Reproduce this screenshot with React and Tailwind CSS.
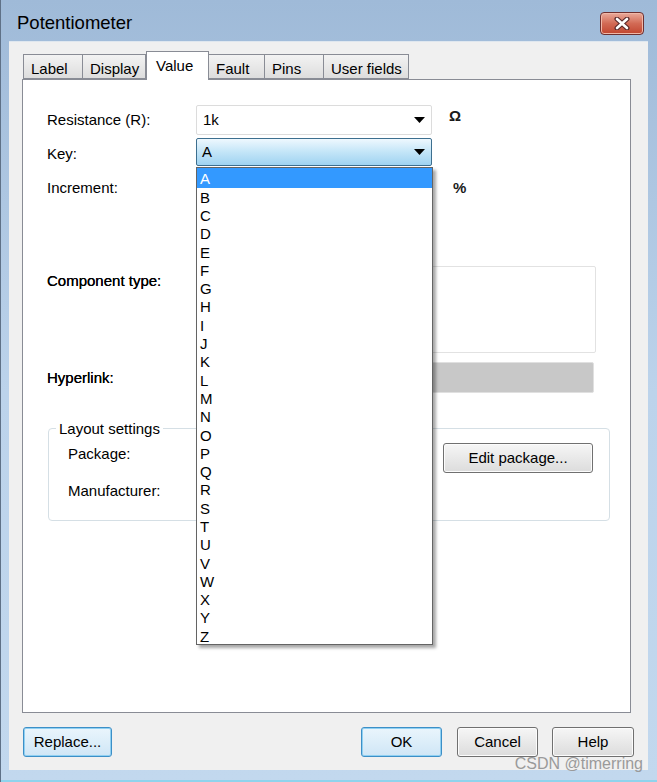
import React from 'react';

const TABS = [
  { key: 'label', label: 'Label', w: 'w-[60px]' },
  { key: 'display', label: 'Display', w: 'w-[64px]' },
  { key: 'value', label: 'Value', w: 'w-[63px]' },
  { key: 'fault', label: 'Fault', w: 'w-[57px]' },
  { key: 'pins', label: 'Pins', w: 'w-[60px]' },
  { key: 'user', label: 'User fields', w: 'w-[86px]' },
];

const LETTERS = 'ABCDEFGHIJKLMNOPQRSTUVWXYZ'.split('');

function Arrow() {
  return (
    <svg width="11" height="6" viewBox="0 0 11 6" className="shrink-0">
      <path d="M0 0 L11 0 L5.5 6 Z" fill="#000" />
    </svg>
  );
}

function WinButton({ children, focused, className = '' }) {
  return (
    <button
      className={`h-[30px] rounded-[3px] border text-[15px] text-black ${
        focused
          ? 'border-[#3c8fc7] bg-gradient-to-b from-[#eaf5fc] to-[#cfe6f6] shadow-[inset_0_0_0_1px_#8fd0f2]'
          : 'border-[#707070] bg-gradient-to-b from-[#f6f6f6] to-[#dcdcdc] shadow-[inset_0_0_0_1px_#fcfcfc]'
      } ${className}`}
    >
      {children}
    </button>
  );
}

export default function App() {
  return (
    <div
      className="w-[657px] h-[782px] flex flex-col bg-gradient-to-b from-[#9fbad8] via-[#bcd3eb] to-[#c2d8ee] border-l border-[#5f7187] overflow-hidden"
      style={{ fontFamily: '"Liberation Sans", Arial, sans-serif' }}
    >
      {/* Title bar */}
      <div className="h-[41px] shrink-0 flex items-center justify-between pl-[16px] pr-[13px] pt-[5px]">
        <span className="text-[18.5px] text-black">Potentiometer</span>
        <div className="w-[44px] h-[23px] rounded-[4px] border border-[#6e3030] bg-gradient-to-b from-[#e9a99a] via-[#d26a55] to-[#c1452f] flex items-center justify-center shadow-[inset_0_0_0_1px_#f0b8a8]">
          <svg width="16" height="13" viewBox="0 0 16 13">
            <path d="M3 2 L13 11 M13 2 L3 11" stroke="#5a2a2a" strokeWidth="5" strokeLinecap="round" />
            <path d="M3 2 L13 11 M13 2 L3 11" stroke="#ffffff" strokeWidth="2.6" strokeLinecap="round" />
          </svg>
        </div>
      </div>

      {/* Client area */}
      <div className="ml-[8px] w-[639px] h-[729px] shrink-0 bg-[#f0f0f0] border-t border-[#dfe7ef] pl-[13px] relative">
        {/* Tabs */}
        <div className="mt-[9px] h-[28px] flex items-end relative z-10 pl-[1px]">
          {TABS.map((t) =>
            t.key === 'value' ? (
              <div
                key={t.key}
                className={`${t.w} h-[29px] -mb-[1px] bg-white border border-b-0 border-[#898c95] pl-[9px] pt-[3px] text-[15px] text-black`}
              >
                {t.label}
              </div>
            ) : (
              <div
                key={t.key}
                className={`${t.w} h-[25px] -ml-px first:ml-0 bg-gradient-to-b from-[#f3f3f3] to-[#dddddd] border border-[#898c95] pl-[7px] pt-[3px] text-[15px] text-black`}
              >
                {t.label}
              </div>
            )
          )}
        </div>

        {/* Tab panel */}
        <div className="w-[609px] h-[634px] bg-white border border-[#898c95] relative pl-[24px]">
          {/* Resistance */}
          <div className="mt-[25px] flex items-center h-[30px]">
            <span className="w-[149px] text-[15px] text-black">Resistance (R):</span>
            <div className="w-[236px] h-[30px] rounded-[2px] border border-[#dcdcdc] bg-white flex items-center justify-between pl-[6px] pr-[6px] text-[15px] text-black">
              <span>1k</span>
              <Arrow />
            </div>
            <span className="ml-[17px] -mt-[8px] text-[15px] font-bold text-[#1a1a1a]">Ω</span>
          </div>

          {/* Key */}
          <div className="mt-[3px] flex items-center h-[28px]">
            <span className="w-[149px] text-[15px] text-black pt-[4px]">Key:</span>
            <div className="w-[236px] h-[28px] rounded-[2px] border border-[#3d6f8f] bg-gradient-to-b from-[#eef8fe] via-[#c3e5f8] to-[#9fd3f1] flex items-center justify-between pl-[5px] pr-[6px] text-[15px] text-black">
              <span>A</span>
              <Arrow />
            </div>
          </div>

          {/* Increment */}
          <div className="mt-[8px] flex items-center h-[28px]">
            <span className="w-[149px] text-[15px] text-black">Increment:</span>
            <div className="w-[236px] h-[28px] border border-[#dcdcdc]" />
            <span className="ml-[21px] text-[15px] font-bold text-[#1a1a1a]">%</span>
          </div>

          {/* Component type */}
          <div className="mt-[64px] flex items-start">
            <span className="w-[149px] mt-[4px] text-[15px] text-black [text-shadow:0_0_0.4px_#000]">Component type:</span>
            <div className="w-[400px] h-[87px] rounded-[2px] border border-[#e2e2e2] bg-white" />
          </div>

          {/* Hyperlink */}
          <div className="mt-[9px] flex items-center">
            <span className="w-[149px] pt-[1px] text-[15px] text-black [text-shadow:0_0_0.4px_#000]">Hyperlink:</span>
            <div className="w-[398px] h-[31px] rounded-[2px] border border-[#e0e0e0] bg-[#c8c8c8]" />
          </div>

          {/* Layout settings */}
          <div className="mt-[35px] ml-[1px] w-[562px] h-[93px] rounded-[4px] border border-[#d5dfe5] relative flex justify-between pl-[19px] pr-[16px]">
            <span className="absolute -top-[11px] left-[7px] px-[3px] bg-white text-[15px] text-black">
              Layout settings
            </span>
            <div className="flex flex-col pt-[14px] gap-[19px] text-[15px] text-black">
              <span className="h-[18px]">Package:</span>
              <span className="h-[18px]">Manufacturer:</span>
            </div>
            <WinButton className="mt-[14px] w-[150px]">Edit package...</WinButton>
          </div>

          {/* Open dropdown list for Key */}
          <div className="absolute left-[173px] top-[87px] w-[237px] h-[478px] bg-white border border-[#646464] shadow-[3px_3px_3px_rgba(0,0,0,0.35)] z-20">
            {LETTERS.map((l, i) => (
              <div
                key={l}
                className={`pl-[3px] text-[15px] leading-none flex items-center ${
                  i === 0 ? 'h-[20px] bg-[#3399ff] text-white' : 'h-[18.3px] text-black'
                }`}
              >
                {l}
              </div>
            ))}
          </div>
        </div>

        {/* Bottom buttons */}
        <div className="mt-[14px] flex items-center pl-[1px] pr-[14px]">
          <WinButton focused className="w-[89px]">Replace...</WinButton>
          <div className="flex-1" />
          <WinButton focused className="w-[81px]">OK</WinButton>
          <WinButton className="ml-[15px] w-[81px]">Cancel</WinButton>
          <WinButton className="ml-[14px] w-[82px]">Help</WinButton>
        </div>

        <span className="absolute right-[5px] bottom-[-6px] text-[16px] text-[#9a9a9a] z-30">CSDN @timerring</span>
      </div>
      <div className="flex-1 border-b-2 border-[#8fd3ec]" />
    </div>
  );
}
